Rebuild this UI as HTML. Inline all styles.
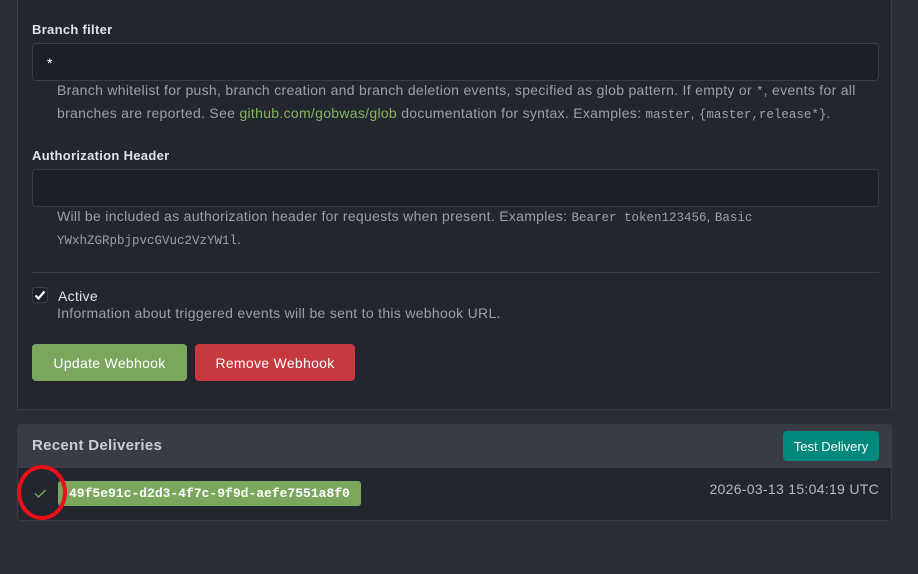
<!DOCTYPE html>
<html><head><style>
body{margin:0;width:918px;height:574px;background:#2b2e37;font-family:"Liberation Sans",sans-serif;position:relative;overflow:hidden;color:#dfe2e8;letter-spacing:0.3px}
.p{position:absolute;left:17px;width:875px;background:#23262e;border:1px solid #3a3d47;box-sizing:border-box}
.lbl{position:absolute;left:32px;font-size:13px;font-weight:bold;color:#dfe2e8}
.in{position:absolute;left:32px;width:847px;height:38px;background:#1e2027;border:1px solid #3a3d47;border-radius:4px;box-sizing:border-box}
.help{position:absolute;left:57px;font-size:14px;color:#9aa0ac;line-height:21px;width:810px}
.help a{color:#87b65e;text-decoration:none}
code{font-family:"Liberation Mono",monospace;font-size:12.5px;letter-spacing:0}
.btn{position:absolute;top:344px;height:37px;border-radius:4px;color:#fff;font-size:14px;display:flex;align-items:center;justify-content:center;box-sizing:border-box}
</style></head><body>
<div class="p" style="top:-2px;height:412px;border-top:none"></div>
<div class="lbl" style="top:22px">Branch filter</div>
<div class="in" style="top:43px"><span style="position:absolute;left:14px;top:11px;font-size:14px;color:#fff">*</span></div>
<div class="help" style="top:80px">Branch whitelist for push, branch creation and branch deletion events, specified as glob pattern. If empty or <code>*</code>, events for all<br>branches are reported. See <a>github.com/gobwas/glob</a> documentation for syntax. Examples: <code>master</code>, <code>{master,release*}</code>.</div>
<div class="lbl" style="top:148px">Authorization Header</div>
<div class="in" style="top:169px"></div>
<div class="help" style="top:206px">Will be included as authorization header for requests when present. Examples: <code>Bearer token123456</code>, <code>Basic</code><br><code>YWxhZGRpbjpvcGVuc2VzYW1l</code>.</div>
<div style="position:absolute;left:32px;top:272px;width:847px;height:1px;background:#3a3d47"></div>
<div style="position:absolute;left:32px;top:287px;width:16px;height:16px;border:1px solid #3a3d47;border-radius:3px;box-sizing:border-box;background:#1e2027"><svg width="14" height="14" viewBox="0 0 14 14" style="position:absolute;left:0;top:0"><path d="M2.5 7.5l3 3 6-7" stroke="#fff" stroke-width="2.2" fill="none"/></svg></div>
<div style="position:absolute;left:58px;top:288px;font-size:14px;color:#dfe2e8">Active</div>
<div class="help" style="top:303px">Information about triggered events will be sent to this webhook URL.</div>
<div class="btn" style="left:32px;width:155px;background:#7ba65e">Update Webhook</div>
<div class="btn" style="left:195px;width:160px;background:#c8393f">Remove Webhook</div>
<div class="p" style="top:424px;height:97px;border-radius:4px;overflow:hidden"><div style="height:42px;background:#393c47;border-bottom:1px solid #3a3d47"></div></div>
<div style="position:absolute;left:32px;top:437px;font-size:15px;font-weight:bold;color:#c9cdd5">Recent Deliveries</div>
<div style="position:absolute;left:783px;top:431px;width:96px;height:30px;background:#00897b;border-radius:4px;color:#fff;font-size:13px;letter-spacing:0;display:flex;align-items:center;justify-content:center">Test Delivery</div>
<svg style="position:absolute;left:33px;top:486px" width="14" height="14" viewBox="0 0 14 14"><path d="M2 7.5l3.5 3.5 7-7" stroke="#7ba65e" stroke-width="1.5" fill="none"/></svg>
<div style="position:absolute;left:58px;top:481px;width:303px;height:25px;background:#7ba65e;border-radius:3px;color:#fff;font-family:'Liberation Mono',monospace;font-size:13px;letter-spacing:0;font-weight:bold;line-height:25px;padding-left:11px;box-sizing:border-box;white-space:nowrap;overflow:hidden">49f5e91c-d2d3-4f7c-9f9d-aefe7551a8f0</div>
<div style="position:absolute;left:17px;top:465px;width:50px;height:55px;border:4px solid #e8101a;border-radius:50%;box-sizing:border-box"></div>
<div style="position:absolute;right:39px;top:481px;font-size:14px;color:#b6bac3">2026-03-13 15:04:19 UTC</div>
</body></html>
